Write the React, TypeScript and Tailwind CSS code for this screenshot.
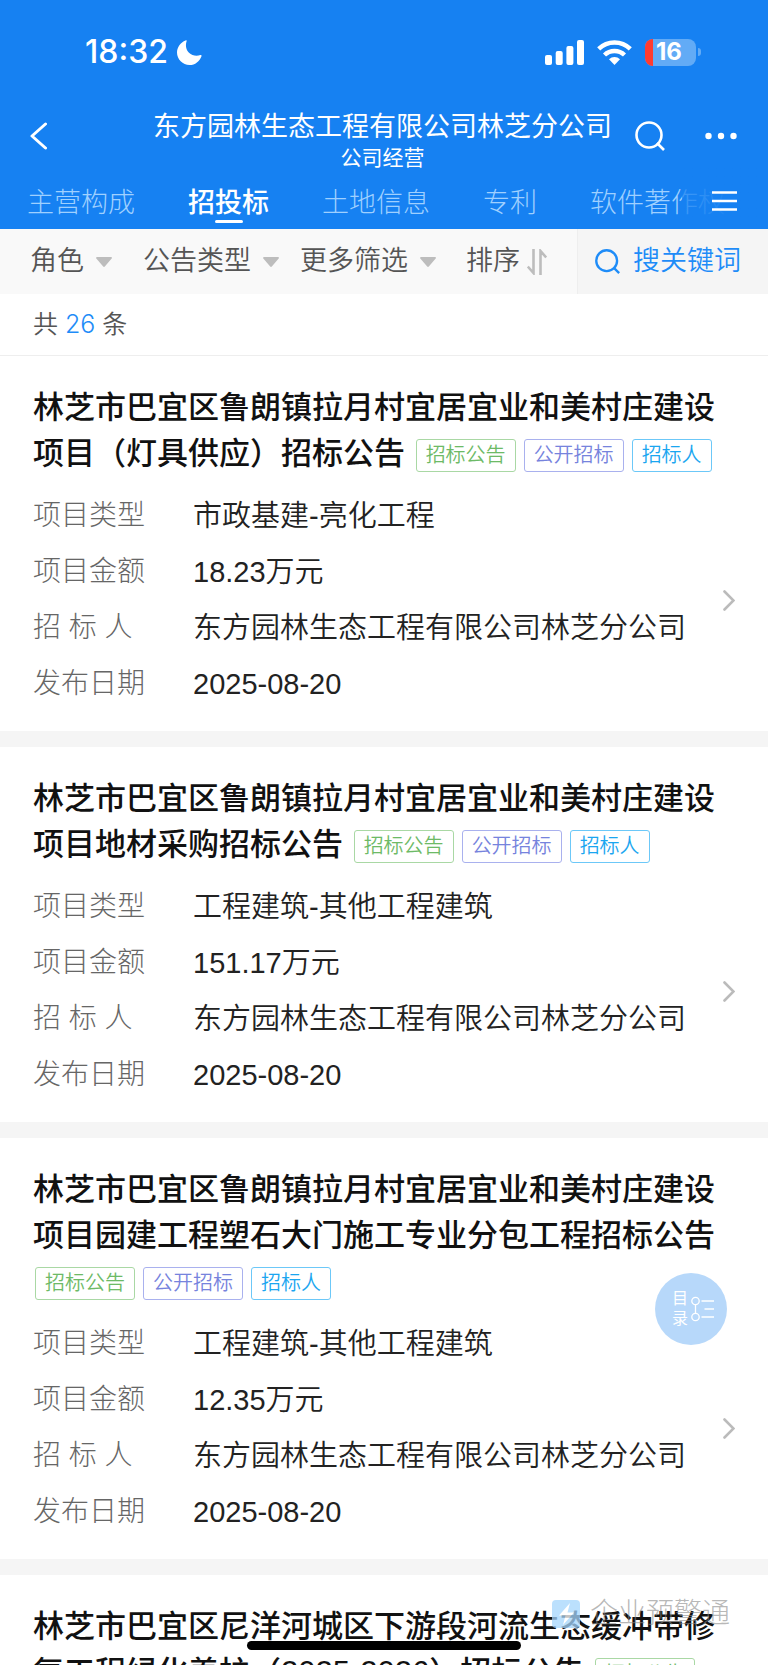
import { type ReactNode } from "react";

type TagKind = "notice" | "open" | "owner";

type Tender = {
  title: string;
  tags: { text: string; kind: TagKind }[];
  rows: { label: string; value: string }[];
};

const COMPANY = "东方园林生态工程有限公司林芝分公司";

const TAGS: Tender["tags"] = [
  { text: "招标公告", kind: "notice" },
  { text: "公开招标", kind: "open" },
  { text: "招标人", kind: "owner" },
];

const makeRows = (type: string, amount: string) => [
  { label: "项目类型", value: type },
  { label: "项目金额", value: amount },
  { label: "招 标 人", value: COMPANY },
  { label: "发布日期", value: "2025-08-20" },
];

const TENDERS: Tender[] = [
  {
    title: "林芝市巴宜区鲁朗镇拉月村宜居宜业和美村庄建设项目（灯具供应）招标公告",
    tags: TAGS,
    rows: makeRows("市政基建-亮化工程", "18.23万元"),
  },
  {
    title: "林芝市巴宜区鲁朗镇拉月村宜居宜业和美村庄建设项目地材采购招标公告",
    tags: TAGS,
    rows: makeRows("工程建筑-其他工程建筑", "151.17万元"),
  },
  {
    title: "林芝市巴宜区鲁朗镇拉月村宜居宜业和美村庄建设项目园建工程塑石大门施工专业分包工程招标公告",
    tags: TAGS,
    rows: makeRows("工程建筑-其他工程建筑", "12.35万元"),
  },
  {
    title: "林芝市巴宜区尼洋河城区下游段河流生态缓冲带修复工程绿化养护（2025-2026）招标公告",
    tags: TAGS.slice(0, 1),
    rows: [],
  },
];

const TABS = ["主营构成", "招投标", "土地信息", "专利", "软件著作权"];

const TAG_STYLE: Record<TagKind, string> = {
  notice: "border-[#a9d8a4] text-[#6dba66]",
  open: "border-[#a9b1ee] text-[#7683dd]",
  owner: "border-[#6cc8f8] text-[#1aa6f0]",
};

function StatusBar() {
  return (
    <div className="flex h-[104px] items-center justify-between pl-[85px] pr-[67px]">
      <div className="flex items-center gap-[9px]">
        <span className="font-[Inter,sans-serif] text-[32px] leading-none font-medium">18:32</span>
        <svg width="25" height="25" viewBox="0 0 25 25" fill="currentColor" aria-hidden="true">
          <path d="M8.6.5C9.3.1 9.9.6 9.6 1.3 8.300 5 8.900 9.700 12 12.700c3.100 3 7.600 3.600 11.400 2.300.8-.3 1.400.4 1.100 1.200C22.700 21.400 18 25 12.600 25 5.700 25 0 19.400 0 12.500 0 7.200 3.500 2.500 8.600.5Z" />
        </svg>
      </div>
      <div className="flex items-center gap-[13px]">
        <svg width="39" height="25" viewBox="0 0 39 25" fill="currentColor" aria-hidden="true">
          <rect x="0" y="15" width="7" height="10" rx="2" />
          <rect x="10.700" y="11" width="7" height="14" rx="2" />
          <rect x="21.400" y="6" width="7" height="19" rx="2" />
          <rect x="32" y="0" width="7" height="25" rx="2" />
        </svg>
        <svg width="35" height="25" viewBox="0 0 35 25" fill="none" stroke="currentColor" strokeWidth="4.400" aria-hidden="true">
          <path d="M1.700 8.900a22.600 22.600 0 0 1 31.600 0" />
          <path d="M7.500 15a14.400 14.400 0 0 1 20 0" />
          <path d="M12 19.200a8 8 0 0 1 11 0L17.500 25Z" fill="currentColor" stroke="none" />
        </svg>
        <div className="flex items-center gap-[2px]">
          <div className="flex h-[27px] w-[51px] items-center overflow-hidden rounded-[8px] bg-[#62abf6]">
            <span className="h-full w-[8px] bg-[#ff3b30]" />
            <span className="pl-[3px] font-[Inter,sans-serif] text-[24px] leading-none font-bold">16</span>
          </div>
          <span className="h-[8px] w-[3px] rounded-r-full bg-[#62abf6]" />
        </div>
      </div>
    </div>
  );
}

function SearchIcon({ size, width }: { size: number; width: number }) {
  return (
    <svg width={size} height={size} viewBox="0 0 30 30" fill="none" stroke="currentColor" strokeWidth={width} aria-hidden="true">
      <circle cx="14" cy="14" r="12.500" />
      <path d="m22 22 7 7" />
    </svg>
  );
}

function TitleBar() {
  return (
    <div className="flex h-[64px] items-center pr-[31px] pl-[30px]">
      <button aria-label="返回" className="flex w-[72px] justify-start">
        <svg width="17" height="28" viewBox="0 0 17 28" fill="none" stroke="currentColor" strokeWidth="3" strokeLinecap="round" strokeLinejoin="round" aria-hidden="true">
          <path d="M15.500 2 2 14l13.500 12" />
        </svg>
      </button>
      <div className="flex flex-1 flex-col items-center pt-[8px] pl-[28px]">
        <h1 className="text-[27px] leading-[36px] whitespace-nowrap">{COMPANY}</h1>
        <p className="text-[21px] leading-[26px]">公司经营</p>
      </div>
      <div className="flex w-[102px] items-center justify-between">
        <button aria-label="搜索">
          <SearchIcon size={30} width={2.6} />
        </button>
        <button aria-label="更多">
          <svg width="32" height="8" viewBox="0 0 32 8" fill="currentColor" aria-hidden="true">
            <circle cx="3.500" cy="4" r="3.200" />
            <circle cx="16" cy="4" r="3.200" />
            <circle cx="28.500" cy="4" r="3.200" />
          </svg>
        </button>
      </div>
    </div>
  );
}

function TabBar() {
  return (
    <nav className="relative flex h-[61px] gap-[53px] overflow-hidden pt-[17px] pl-[27px]">
      {TABS.map((tab) => {
        const active = tab === "招投标";
        return (
          <a
            key={tab}
            href="#"
            aria-current={active ? "page" : undefined}
            className={
              active
                ? "flex shrink-0 flex-col items-center text-[27px] leading-[36px] font-medium"
                : "shrink-0 text-[27px] leading-[36px] font-light text-[#9fd0ff]"
            }
          >
            {tab}
            {active && <span className="-mt-px h-[3px] w-[28px] rounded-full bg-white" />}
          </a>
        );
      })}
      <div className="absolute inset-y-0 right-0 flex w-[86px] items-start justify-end bg-linear-to-r from-[#1681f2]/70 to-[#1681f2] to-60% pt-[23px] pr-[31px]">
        <button aria-label="全部栏目">
          <svg width="25" height="20" viewBox="0 0 25 20" stroke="currentColor" strokeWidth="2.600" aria-hidden="true">
            <path d="M0 1.500h25M0 10h25M0 18.500h25" />
          </svg>
        </button>
      </div>
    </nav>
  );
}

function FilterButton({ children }: { children: ReactNode }) {
  return (
    <button className="flex items-center gap-[12px] whitespace-nowrap">
      {children}
      <svg width="16" height="10" viewBox="0 0 16 10" fill="#bdbdbd" aria-hidden="true">
        <path d="M1 0h14c.8 0 1.200.9.700 1.500L8.800 9.500c-.4.5-1.200.5-1.600 0L.3 1.500C-.2.900.2 0 1 0Z" />
      </svg>
    </button>
  );
}

function FilterBar() {
  return (
    <div className="flex h-[65px] bg-[#f9f9f9] text-[27px] font-[350] text-[#555]">
      <div className="grid flex-1 grid-cols-[113fr_157fr_166fr_111fr] pl-[30px]">
        <FilterButton>角色</FilterButton>
        <FilterButton>公告类型</FilterButton>
        <FilterButton>更多筛选</FilterButton>
        <button className="flex items-center gap-[7px] whitespace-nowrap">
          排序
          <svg width="20" height="26" viewBox="0 0 20 26" fill="none" stroke="#bdbdbd" strokeWidth="2.600" aria-hidden="true">
            <path d="M6.500 0v24L.8 17.500M13.500 26V2l5.700 6.500" />
          </svg>
        </button>
      </div>
      <button className="flex w-[191px] items-center gap-[13px] border-l border-[#eee] bg-[#f5f5f5] pl-[17px] whitespace-nowrap text-[#1e8cf8]">
        <SearchIcon size={25} width={2.8} />
        搜关键词
      </button>
    </div>
  );
}

function TenderCard({ tender }: { tender: Tender }) {
  return (
    <article className="bg-white px-[33px] pt-[29px] pb-[19px]">
      <h2 className="text-[31px] leading-[46px] font-medium text-[#111]">
        {tender.title}{" "}
        <span className="ml-[2px] inline-flex gap-[8px] align-middle">
          {tender.tags.map((tag) => (
            <span
              key={tag.text}
              className={`rounded-[3px] border px-[9px] text-[20px] leading-[31px] font-[350] ${TAG_STYLE[tag.kind]}`}
            >
              {tag.text}
            </span>
          ))}
        </span>
      </h2>
      <div className="mt-[11px] flex items-center justify-between">
        <dl className="leading-[56px]">
          {tender.rows.map((row) => (
            <div key={row.label} className="flex">
              <dt className="w-[160px] text-[28px] font-light text-[#666]">{row.label}</dt>
              <dd className="text-[29px] font-[350] text-[#222]">{row.value}</dd>
            </div>
          ))}
        </dl>
        <svg width="12" height="21" viewBox="0 0 12 21" fill="none" stroke="#bbb" strokeWidth="2.600" strokeLinecap="round" aria-hidden="true">
          <path d="m1.500 1.500 9 9-9 9" />
        </svg>
      </div>
    </article>
  );
}

function CatalogButton() {
  return (
    <button
      aria-label="目录"
      className="absolute right-[41px] bottom-[320px] flex size-[72px] items-center justify-center gap-[3px] rounded-full bg-[#b7d8fa] pl-[4px] text-white"
    >
      <span className="w-[16px] text-[16px] leading-[20px]">目录</span>
      <svg width="23" height="26" viewBox="0 0 23 26" fill="none" stroke="currentColor" strokeWidth="1.300" aria-hidden="true">
        <circle cx="4.500" cy="5" r="3.700" />
        <circle cx="4.500" cy="21" r="3.700" />
        <path d="M4.500 8.700v8.600M10.500 5H23M13.500 13H23M10.500 21H23" />
      </svg>
    </button>
  );
}

function Watermark() {
  return (
    <div className="absolute right-[38px] bottom-[34px] flex items-center gap-[10px]">
      <svg width="28" height="28" viewBox="0 0 28 28" opacity="0.750" aria-hidden="true">
        <rect width="28" height="28" rx="4" fill="#a5d6fd" />
        <path d="M18 3 7 15.500h6.500L11 25l11-12.500h-6.500Z" fill="#fff" />
      </svg>
      <span className="text-[28px] leading-[34px] font-light text-[#888]/60">企业预警通</span>
    </div>
  );
}

export default function App() {
  return (
    <div className="relative flex h-screen flex-col overflow-hidden bg-white font-['Liberation_Sans','Noto_Sans_CJK_SC',sans-serif]">
      <header className="shrink-0 bg-[#1681f2] text-white">
        <StatusBar />
        <TitleBar />
        <TabBar />
      </header>
      <div className="shrink-0">
        <FilterBar />
      </div>
      <main className="min-h-0 flex-1 overflow-y-auto [scrollbar-width:none]">
        <p className="border-b border-[#eee] px-[33px] text-[25px] leading-[61px] font-[350] text-[#555]">
          共 <span className="font-[Inter,sans-serif] text-[#1e8cf8]">26</span> 条
        </p>
        <div className="flex flex-col gap-[16px] bg-[#f5f5f5]">
          {TENDERS.map((tender) => (
            <TenderCard key={tender.title} tender={tender} />
          ))}
        </div>
      </main>
      <CatalogButton />
      <Watermark />
      <div className="absolute bottom-[15px] left-1/2 h-[9px] w-[274px] -translate-x-1/2 rounded-full bg-black" />
    </div>
  );
}
